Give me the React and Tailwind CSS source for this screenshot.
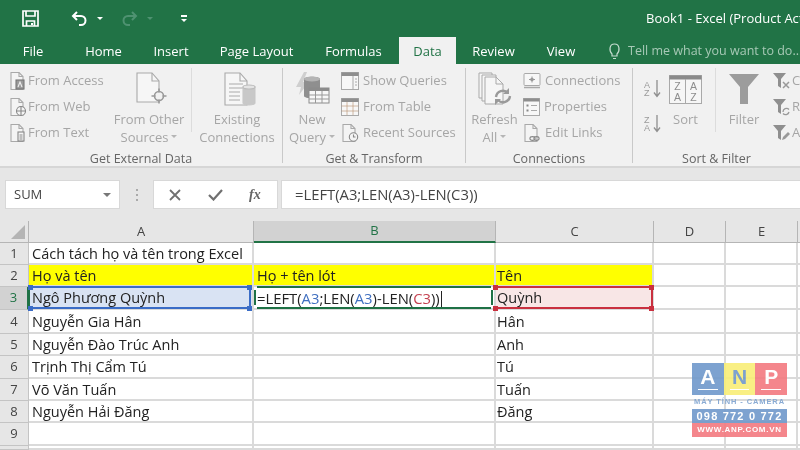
import React from "react";

const G = "#a9a9a9";
const Doc = ({ children, s = 18 }) => (
  <svg width={s} height={s + 2} viewBox="0 0 18 20" fill="none" stroke={G} strokeWidth="1.1">
    <path d="M2 1.5h8l4 4v13H2z" fill="#f4f4f4" />
    <path d="M10 1.5v4h4" />
    {children}
  </svg>
);
const Access = () => <Doc><rect x="7" y="9" width="8" height="9" fill="#9a9a9a" stroke="#777" /><path d="M9 16l2-5 2 5" stroke="#eee" /></Doc>;
const Web = () => <Doc><circle cx="12" cy="14" r="4.5" fill="#f4f4f4" stroke="#888" /><path d="M7.5 14h9M12 9.5v9" stroke="#888" /></Doc>;
const TextI = () => <Doc><rect x="9" y="9" width="6" height="9" fill="#f4f4f4" stroke="#888" /><path d="M10.5 12h3M10.5 14h3M10.5 16h3" stroke="#888" /></Doc>;
const Tbl = ({ dark }) => (
  <svg width="18" height="18" viewBox="0 0 18 18" fill="none" stroke={G}>
    <rect x=".5" y=".5" width="17" height="17" fill="#f7f7f7" />
    <rect x=".5" y=".5" width="17" height="3.5" fill="#8e8e8e" stroke="none" />
    {dark ? <path d="M.5 8h17M.5 13h17M6 4v13M12 4v13" stroke="#b98f6e" strokeOpacity=".6" /> : <path d="M12 4v13M14 7h2M14 10h2M14 13h2" />}
  </svg>
);
const Recent = () => <Doc><circle cx="12.5" cy="14" r="4.2" fill="#f4f4f4" stroke="#888" /><path d="M12.5 11.5V14h2" stroke="#888" /></Doc>;
const Conn = () => (
  <svg width="18" height="18" viewBox="0 0 18 18" fill="none" stroke={G}>
    <rect x="1" y="1.5" width="16" height="12" rx="1" fill="#f7f7f7" />
    <path d="M1 15.5h16" strokeWidth="1.5" />
    <path d="M6 7.5h6M9 4.5v6" stroke="#999" />
    <circle cx="9" cy="7.5" r="1.8" fill="#999" stroke="none" />
  </svg>
);
const Props = () => (
  <svg width="17" height="18" viewBox="0 0 17 18" fill="none" stroke={G}>
    <rect x=".5" y=".5" width="16" height="17" fill="#f7f7f7" />
    <rect x=".5" y=".5" width="16" height="3" fill="#8e8e8e" stroke="none" />
    <path d="M3.5 7.5h2M3.5 12.5h2" strokeWidth="2" stroke="#888" />
    <path d="M8 7.5h6M8 12.5h6" />
  </svg>
);
const Links = () => <Doc><ellipse cx="9.5" cy="15.5" rx="2.6" ry="1.9" stroke="#888" /><ellipse cx="13.5" cy="15.5" rx="2.6" ry="1.9" stroke="#888" /></Doc>;

const BigOther = () => (
  <svg className="translate-x-[3px]" width="32" height="34" viewBox="0 0 32 34" fill="none" stroke={G} strokeWidth="1.1">
    <path d="M1 1h15l7 8v21H1z" fill="#f6f6f6" />
    <path d="M16 1v8h7" />
    <circle cx="23" cy="24" r="4.5" fill="#f1f1f1" strokeWidth="1.6" stroke="#999" />
    <path d="M23 16.5v4M23 27.5v4M15.5 24h4M26.5 24h4" strokeWidth="1.6" stroke="#999" />
  </svg>
);
const BigExisting = () => (
  <svg className="translate-x-[3px]" width="32" height="34" viewBox="0 0 32 34" fill="none" stroke={G} strokeWidth="1.1">
    <path d="M1 1h15l7 8v24H1z" fill="#f6f6f6" />
    <path d="M16 1v8h7M5 12h14M5 16h14M5 20h11M5 24h11M5 28h11" />
    <path d="M19 15c0-2 12-2 12 0v16c0 2.500-12 2.500-12 0z" fill="#c8c8c8" stroke="#c8c8c8" />
    <ellipse cx="25" cy="15" rx="6" ry="2" fill="#e4e4e4" stroke="#bbb" />
  </svg>
);
const BigQuery = () => (
  <svg width="36" height="38" viewBox="0 0 36 38" fill="none" stroke={G}>
    <path d="M10 2L2 17h5l-2 8 10-13H9l4-10z" fill="#cfcfcf" stroke="none" />
    <path d="M10 9c0-3 16-3 16 0v17c0 3-16 3-16 0z" fill="#8f8f8f" stroke="none" />
    <ellipse cx="18" cy="9" rx="8" ry="2.500" fill="#b4b4b4" stroke="none" />
    <rect x="15" y="18" width="20" height="15" fill="#f7f7f7" stroke="#8c8c8c" />
    <rect x="15" y="18" width="20" height="3" fill="#8c8c8c" stroke="none" />
    <path d="M15 25h20M15 29h20M21.500 21v12M28 21v12" stroke="#999" />
  </svg>
);
const BigRefresh = () => (
  <svg width="34" height="34" viewBox="0 0 34 34" fill="none" stroke={G}>
    <path d="M1 1h13v25H1z" fill="#f6f6f6" />
    <path d="M4 3h14v26H4z" fill="#f6f6f6" />
    <path d="M7 5h11l7 7v20H7z" fill="#f6f6f6" />
    <path d="M18 5v7h7" />
    <path d="M18 25a7 7 0 0112-4M32 24a7 7 0 01-12 4" strokeWidth="2.400" stroke="#9a9a9a" fill="none" />
    <path d="M31 16v6h-6zM17 33v-6h6z" fill="#9a9a9a" stroke="none" />
  </svg>
);
const SortS = ({ top, bot }) => (
  <svg width="19" height="20" viewBox="0 0 19 20">
    <text x="1" y="8.500" fontSize="9" fill="#9a9a9a" fontFamily="Liberation Sans, sans-serif">{top}</text>
    <text x="1" y="17" fontSize="9" fill="#9a9a9a" fontFamily="Liberation Sans, sans-serif">{bot}</text>
    <path d="M14 1v16M11 13.500l3 4 3-4" fill="none" stroke="#8f8f8f" strokeWidth="1.300" />
  </svg>
);
const SortB = () => (
  <svg width="33" height="29" viewBox="0 0 33 29" fill="none" stroke={G}>
    <rect x=".5" y=".5" width="32" height="28" fill="#f6f6f6" />
    <rect x=".5" y=".5" width="32" height="4" fill="#8a8a8a" stroke="none" />
    <path d="M16.500 4v25" />
    <g fontFamily="Liberation Sans, sans-serif" fontSize="10.500" fill="#8d8d8d" stroke="none" textAnchor="middle">
      <text x="8.500" y="15">Z</text><text x="24.500" y="15">A</text>
      <text x="8.500" y="26">A</text><text x="24.500" y="26">Z</text>
    </g>
  </svg>
);
const Funnel = () => (
  <svg width="32" height="32" viewBox="0 0 32 32"><path d="M1 1h30L20 14v17h-8V14z" fill="#9c9c9c" /></svg>
);
const SmallF = ({ kind }) => (
  <svg width="19" height="20" viewBox="0 0 19 20" fill="none">
    <path d="M1 2h13l-5 6v9l-3-2V8z" fill="#8f8f8f" />
    {kind === "c" && <path d="M11 11l6 6M17 11l-6 6" stroke="#999" strokeWidth="1.500" />}
    {kind === "r" && <path d="M11 15a3.500 3.500 0 016-2.500M17 15a3.500 3.500 0 01-6 1.500" stroke="#999" strokeWidth="1.300" />}
    {kind === "a" && <path d="M10 17l1-3 5-5 2 2-5 5z" fill="#999" />}
  </svg>
);

const Small = ({ icon, label, gap = "gap-[4px]" }) => (
  <div className={`flex h-[26px] items-center whitespace-nowrap text-[13px] text-[#a6a6a6] ${gap}`}>
    {icon}
    <span>{label}</span>
  </div>
);
const Caret = () => <span className="ml-[3px] inline-block translate-y-[-2px] border-x-[3px] border-t-[3px] border-x-transparent border-t-[#b5b5b5] align-middle" />;
const Big = ({ w, icon, l1, l2, caret }) => (
  <div className={`flex shrink-0 flex-col items-center whitespace-nowrap text-[13px] leading-[18px] text-[#a6a6a6] ${w}`}>
    <div className="flex h-[42px] items-center justify-center">{icon}</div>
    <div>{l1}</div>
    <div>{l2}{caret && <Caret />}</div>
  </div>
);
const Sep = () => <div className="h-[95px] w-px shrink-0 bg-[#c9c9c9]" />;
const Group = ({ w, label, children }) => (
  <div className={`relative flex h-[99px] shrink-0 flex-col ${w}`}>
    <div className="flex h-[81px] items-start">{children}</div>
    <div className="flex h-[18px] items-center justify-center whitespace-nowrap pt-[2px] text-[12.500px] text-[#666666]">{label}</div>
  </div>
);
const InnerSep = ({ cls = "" }) => <div className={`h-[64px] w-px shrink-0 self-start bg-[#dcdcdc] ${cls}`} />;

const Tab = ({ w, children }) => <div className={`flex h-full shrink-0 items-center justify-center pt-[2px] text-[13px] text-white ${w}`}>{children}</div>;

const F = "font-['Open_Sans',sans-serif]";

const Formula = ({ end }) => (
  <span className="whitespace-nowrap text-[14.800px]">
    =LEFT(<span className="text-[#3f6fc0]">A3</span>;LEN(<span className="text-[#3f6fc0]">A3</span>)-LEN(<span className="text-[#c4404f]">C3</span>))
    {end}
  </span>
);

const Corner = ({ c, pos }) => <span className={`absolute z-10 h-[5px] w-[5px] ${c} ${pos}`} />;

const names = [
  ["Cách tách họ và tên trong Excel", "", ""],
  ["Họ và tên", "Họ + tên lót", "Tên"],
  ["Ngô Phương Quỳnh", "", "Quỳnh"],
  ["Nguyễn Gia Hân", "", "Hân"],
  ["Nguyễn Đào Trúc Anh", "", "Anh"],
  ["Trịnh Thị Cẩm Tú", "", "Tú"],
  ["Võ Văn Tuấn", "", "Tuấn"],
  ["Nguyễn Hải Đăng", "", "Đăng"],
  ["", "", ""],
  ["", "", ""],
];
const colHead = ["A", "B", "C", "D", "E", ""];

const cellBase = "relative flex items-center overflow-visible whitespace-nowrap border-r-2 border-b-2 border-[#dadada] pt-px text-[14.500px] text-[#222222]";

function Cell({ r, c }) {
  const text = c < 3 ? names[r][c] : "";
  if (r === 1 && c < 3) return <div className={`${cellBase} border-r-0 border-b-0 bg-[#ffff00] ${c === 2 ? "pl-[1px]" : "pl-[3px]"}`}>{text}</div>;
  if (r === 2 && c === 0)
    return (
      <div className={`${cellBase} border-r-0 border-b-0 bg-[#d9e3f3] pl-[3px] pt-[2px]`}>
        <span className="absolute inset-x-0 top-[-1px] h-[2px] bg-[#3a6cc6]" />
        <span className="absolute inset-x-0 bottom-[-1px] h-[2px] bg-[#3a6cc6]" />
        <span className="absolute inset-y-0 left-[-1px] w-[2px] bg-[#1e7145]" />
        <span className="absolute inset-y-0 right-[1px] w-[2px] bg-[#3a6cc6]" />
        <Corner c="bg-[#3a6cc6]" pos="left-[-1px] top-[-2px]" />
        <Corner c="bg-[#3a6cc6]" pos="right-0 top-[-2px]" />
        <Corner c="bg-[#3a6cc6]" pos="left-[-1px] bottom-[-3px]" />
        <Corner c="bg-[#3a6cc6]" pos="right-0 bottom-[-3px]" />
        {text}
      </div>
    );
  if (r === 2 && c === 1)
    return (
      <div className={`${cellBase} border-r-0 border-b-0 bg-white pl-[3px] pt-[2px]`}>
        <span className="absolute inset-x-[3px] top-[-1px] h-[2px] bg-[#1e7145]" />
        <span className="absolute inset-x-[3px] bottom-[-1px] h-[2px] bg-[#1e7145]" />
        <span className="absolute left-0 top-[3px] bottom-[3px] w-[2px] bg-[#1e7145]" />
        <span className="absolute right-[1px] top-[3px] bottom-[3px] w-[2px] bg-[#1e7145]" />
        <Formula end={<span className="ml-[1px] inline-block h-[17px] w-px bg-[#222222] align-middle" />} />
      </div>
    );
  if (r === 2 && c === 2)
    return (
      <div className={`${cellBase} border-r-0 border-b-0 bg-[#f8e6e6] pl-[1px] pt-[2px]`}>
        <span className="absolute inset-x-0 top-[-1px] h-[2px] bg-[#c9303f]" />
        <span className="absolute inset-x-0 bottom-[-1px] h-[2px] bg-[#c9303f]" />
        <span className="absolute right-[-1px] inset-y-0 w-[2px] bg-[#c9303f]" />
        <Corner c="bg-[#c9303f]" pos="left-[-3px] top-[-2px]" />
        <Corner c="bg-[#c9303f]" pos="right-[-2px] top-[-2px]" />
        <Corner c="bg-[#c9303f]" pos="left-[-3px] bottom-[-3px]" />
        <Corner c="bg-[#c9303f]" pos="right-[-2px] bottom-[-3px]" />
        {text}
      </div>
    );
  return <div className={`${cellBase} ${c === 2 ? "pl-[1px]" : "pl-[3px]"}`}>{text}</div>;
}

export default function App() {
  return (
    <div className={`relative flex h-[450px] w-[800px] flex-col overflow-hidden bg-white blur-[0.35px] ${F}`}>
      {/* title bar */}
      <div className="flex h-[37px] shrink-0 items-center overflow-hidden bg-[#217346] pl-[22px]">
        <svg className="shrink-0" width="17" height="17" viewBox="0 0 17 17" fill="none" stroke="#ffffff" strokeWidth="1.700">
          <path d="M1 1h15v15H1z" /><path d="M4 1v5h9V1M4.500 16v-5h8v5" />
          <rect x="9" y="13" width="2" height="2" fill="#fff" stroke="none" />
        </svg>
        <svg className="ml-[32px] shrink-0" width="17" height="16" viewBox="0 0 17 16" fill="none" stroke="#ffffff" strokeWidth="2">
          <path d="M6 1L2 5l4 4M2 5h8a4.500 4.500 0 010 9H8" />
        </svg>
        <span className="ml-[9px] shrink-0 border-x-[3px] border-t-[3px] border-x-transparent border-t-white" />
        <svg className="ml-[18px] shrink-0" width="17" height="16" viewBox="0 0 17 16" fill="none" stroke="#4f9271" strokeWidth="2">
          <path d="M11 1l4 4-4 4M15 5H7a4.500 4.500 0 000 9h2" />
        </svg>
        <span className="ml-[9px] shrink-0 border-x-[3px] border-t-[3px] border-x-transparent border-t-[#4f9271]" />
        <div className="ml-[28px] flex shrink-0 flex-col items-center gap-[2px]">
          <span className="h-[1.500px] w-[6px] bg-white" />
          <span className="border-x-[3px] border-t-[3px] border-x-transparent border-t-white" />
        </div>
        <div className="ml-[459px] shrink-0 whitespace-nowrap text-[13px] text-white">Book1 - Excel (Product Activation Failed)</div>
      </div>
      {/* tabs */}
      <div className="flex h-[27px] shrink-0 items-stretch overflow-hidden bg-[#217346]">
        <Tab w="w-[66px]">File</Tab>
        <Tab w="w-[75px]">Home</Tab>
        <Tab w="w-[60px]">Insert</Tab>
        <Tab w="w-[111px]">Page Layout</Tab>
        <Tab w="w-[83px]">Formulas</Tab>
        <div className="ml-[4px] flex w-[57px] shrink-0 items-center justify-center bg-[#f1f1f1] pt-[2px] text-[13px] text-[#217346]">Data</div>
        <Tab w="w-[75px]">Review</Tab>
        <Tab w="w-[60px]">View</Tab>
        <div className="ml-[17px] flex shrink-0 items-center whitespace-nowrap pt-[2px] text-[12.500px] text-[#a7c9b6]">
          <svg className="shrink-0" width="13" height="17" viewBox="0 0 13 17" fill="none" stroke="#c5dccf" strokeWidth="1.200">
            <path d="M4 11C1 8 1 1 6.500 1S12 8 9 11v2H4zM5 15.500h3" />
          </svg>
          <span className="ml-[7px]">Tell me what you want to do...</span>
        </div>
      </div>
      {/* ribbon */}
      <div className="flex h-[104px] shrink-0 overflow-hidden border-b-2 border-[#d6d6d6] bg-[#f1f1f1] pt-[4px]">
        <Group w="w-[282px]" label="Get External Data">
          <div className="w-[110px] shrink-0 pl-[9px]">
            <Small icon={<Access />} label="From Access" gap="gap-[1px]" />
            <Small icon={<Web />} label="From Web" gap="gap-[1px]" />
            <Small icon={<TextI />} label="From Text" gap="gap-[1px]" />
          </div>
          <Big w="w-[78px]" icon={<BigOther />} l1="From Other" l2="Sources" caret />
          <InnerSep cls="ml-[3px]" />
          <Big w="w-[90px]" icon={<BigExisting />} l1="Existing" l2="Connections" />
        </Group>
        <Sep />
        <Group w="w-[182px]" label="Get & Transform">
          <Big w="w-[58px]" icon={<BigQuery />} l1="New" l2="Query" caret />
          <div className="shrink-0">
            <Small icon={<Tbl />} label="Show Queries" />
            <Small icon={<Tbl dark />} label="From Table" />
            <Small icon={<Recent />} label="Recent Sources" />
          </div>
        </Group>
        <Sep />
        <Group w="w-[166px]" label="Connections">
          <Big w="w-[57px]" icon={<BigRefresh />} l1="Refresh" l2="All" caret />
          <div className="shrink-0">
            <Small icon={<Conn />} label="Connections" />
            <Small icon={<Props />} label="Properties" />
            <Small icon={<Links />} label="Edit Links" />
          </div>
        </Group>
        <Sep />
        <Group w="w-[167px]" label="Sort & Filter">
          <div className="flex w-[32px] shrink-0 flex-col gap-[15px] pl-[10px] pt-[11px]">
            <SortS top="A" bot="Z" />
            <SortS top="Z" bot="A" />
          </div>
          <div className="mr-[9px] flex w-[41px] shrink-0 flex-col items-center text-[13px] leading-[18px] text-[#a6a6a6]">
            <div className="flex h-[42px] items-center justify-center"><SortB /></div>
            <div>Sort</div>
          </div>
          <InnerSep />
          <div className="flex w-[56px] shrink-0 flex-col items-center text-[13px] leading-[18px] text-[#a6a6a6]">
            <div className="flex h-[42px] items-center justify-center"><Funnel /></div>
            <div>Filter</div>
          </div>
          <div className="shrink-0">
            <Small icon={<SmallF kind="c" />} label="Clear" gap="gap-[1px]" />
            <Small icon={<SmallF kind="r" />} label="Reapply" gap="gap-[1px]" />
            <Small icon={<SmallF kind="a" />} label="Advanced" gap="gap-[1px]" />
          </div>
        </Group>
      </div>
      {/* formula bar */}
      <div className="flex h-[53px] shrink-0 items-start bg-[#e6e6e6] pl-[6px] pt-[13px]">
        <div className="flex h-[27px] w-[113px] shrink-0 items-center justify-between bg-white pl-[8px] pr-[8px] text-[13px] text-[#444444] shadow-[0_0_0_1px_#d8d8d8]">
          SUM
          <span className="border-x-[4px] border-t-[4px] border-x-transparent border-t-[#777777]" />
        </div>
        <div className="flex w-[35px] shrink-0 flex-col items-center gap-[3px] pt-[8px]">
          <span className="h-[2px] w-[2px] bg-[#aaaaaa]" /><span className="h-[2px] w-[2px] bg-[#aaaaaa]" /><span className="h-[2px] w-[2px] bg-[#aaaaaa]" />
        </div>
        <div className="flex h-[27px] w-[123px] shrink-0 items-center bg-white pl-[15px] shadow-[0_0_0_1px_#d8d8d8]">
          <svg width="12" height="12" viewBox="0 0 12 12" fill="none" stroke="#707070" strokeWidth="1.800"><path d="M1 1l10 10M11 1L1 11" /></svg>
          <svg className="ml-[27px]" width="15" height="12" viewBox="0 0 15 12" fill="none" stroke="#707070" strokeWidth="2.200"><path d="M1 6l4.500 4.500L14 1" /></svg>
          <span className="ml-[26px] font-['Liberation_Serif',serif] text-[14px] font-bold italic text-[#666666]">fx</span>
        </div>
        <div className="ml-[5px] flex h-[27px] min-w-0 flex-1 items-center bg-white pl-[13px] text-[14.800px] text-[#444444] shadow-[0_0_0_1px_#d8d8d8]">
          =LEFT(A3;LEN(A3)-LEN(C3))
        </div>
      </div>
      {/* sheet */}
      <div className="grid min-h-0 flex-1 grid-cols-[29px_225px_242px_158px_72px_72px_1fr] grid-rows-[22px_22px_22px_23px_24px_22px_23px_22px_22px_23px_4px]">
        <div className="flex items-end justify-end border-r border-b border-[#b5b5b5] bg-[#e6e6e6] pb-[3px] pr-[3px]">
          <svg width="14" height="14" viewBox="0 0 14 14"><path d="M14 0v14H0z" fill="#b4b4b4" /></svg>
        </div>
        {colHead.map((h, i) => (
          <div
            key={i}
            className={
              i === 1
                ? "flex items-center justify-center border-r border-b-2 border-r-[#b5b5b5] border-b-[#217346] bg-[#d2d2d2] text-[13px] text-[#217346]"
                : "flex items-center justify-center border-r border-b border-[#b5b5b5] bg-[#e6e6e6] text-[13px] text-[#444444]"
            }
          >
            {h}
          </div>
        ))}
        {names.map((_, r) => (
          <React.Fragment key={r}>
            <div
              className={
                r === 2
                  ? "flex items-center justify-center border-r-2 border-b border-r-[#217346] border-b-[#c4c4c4] bg-[#d2d2d2] text-[13px] text-[#217346]"
                  : "flex items-center justify-center border-r border-b border-[#c4c4c4] bg-[#e6e6e6] text-[13px] text-[#444444]"
              }
            >
              {r < 9 ? r + 1 : ""}
            </div>
            {[0, 1, 2, 3, 4, 5].map((c) => <Cell key={c} r={r} c={c} />)}
          </React.Fragment>
        ))}
      </div>
      {/* watermark */}
      <div className="absolute left-[692px] top-[363px] flex w-[95px] flex-col font-['Liberation_Sans',sans-serif] font-bold opacity-90">
        <div className="flex h-[32px] text-[21px] leading-[26px]">
          <div className="relative flex flex-1 items-start justify-center bg-[#7099cb] pt-px text-white">A<span className="absolute bottom-[5px] left-[6px] right-[6px] h-px bg-white" /></div>
          <div className="relative flex flex-1 items-start justify-center bg-[#f9ee77] pt-px text-[#6f97cc]">N<span className="absolute bottom-[5px] left-[6px] right-[6px] h-px bg-white" /></div>
          <div className="relative flex flex-1 items-start justify-center bg-[#f37a80] pt-px text-white">P<span className="absolute bottom-[5px] left-[6px] right-[6px] h-px bg-white" /></div>
        </div>
        <div className="flex h-[14px] items-center justify-center whitespace-nowrap text-[7.500px] tracking-[0.9px] text-[#7ea3d0]">MÁY TÍNH - CAMERA</div>
        <div className="flex h-[14px] items-center justify-center whitespace-nowrap bg-[#7099cb] text-[11px] tracking-[1.2px] text-white">098 772 0 772</div>
        <div className="flex h-[14px] items-center justify-center whitespace-nowrap bg-[#f37a80] text-[8px] tracking-[0.7px] text-white">WWW.ANP.COM.VN</div>
      </div>
    </div>
  );
}
